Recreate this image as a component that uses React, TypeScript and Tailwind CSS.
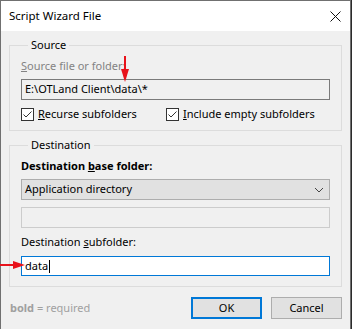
import React from "react";

const font = { fontFamily: "'Noto Sans', 'Open Sans', sans-serif" };

const CheckBox: React.FC<{ children: React.ReactNode }> = ({ children }) => (
  <label className="flex items-center gap-[4px]">
    <span className="flex size-[13px] items-center justify-center border border-[#333333] bg-white">
      <svg width="11" height="11" viewBox="0 0 11 11">
        <path d="M1.5 5.5 L4 8 L9.5 2.5" fill="none" stroke="#333" strokeWidth="1" />
      </svg>
    </span>
    <span>{children}</span>
  </label>
);

const GroupBox: React.FC<{
  title: string;
  className?: string;
  children: React.ReactNode;
}> = ({ title, className = "", children }) => (
  <fieldset className={`border border-[#dcdcdc] px-[11px] ${className}`}>
    <legend className="ml-[7px] px-[3px] leading-[16px]">{title}</legend>
    {children}
  </fieldset>
);

export default function App() {
  return (
    <div
      className="relative flex h-[329px] w-[352px] overflow-hidden bg-[#2b2b2b] text-[11px] text-black"
      style={font}
    >
      <div className="flex h-[330px] w-[351px] flex-col border border-[#707070] bg-[#f0f0f0]">
        {/* Title bar */}
        <div className="flex h-[30px] items-center justify-between bg-white pl-[8px] pr-[8px]">
          <span className="text-[11.5px] leading-[16px]">Script Wizard File</span>
          <svg width="11" height="11" viewBox="0 0 11 11" className="mr-[1px]">
            <path d="M0.5 0.5 L10.5 10.5 M10.5 0.5 L0.5 10.5" stroke="#111" strokeWidth="1" />
          </svg>
        </div>

        <div className="flex flex-col px-[8px] pt-[6px]">
          <GroupBox title="Source" className="pb-[9px]">
            <div className="pt-[5px] leading-[16px] text-[#838383]">
              <u>S</u>ource file or folder:
            </div>
            <div className="mt-[5px] flex h-[21px] items-center border border-[#7a7a7a] bg-[#f0f0f0] pl-[3px]">
              E:\OTLand Client\data\*
            </div>
            <div className="mt-[8px] flex h-[13px] items-center">
              <div className="w-[145px]">
                <CheckBox>
                  <u>R</u>ecurse subfolders
                </CheckBox>
              </div>
              <CheckBox>
                <u>I</u>nclude empty subfolders
              </CheckBox>
            </div>
          </GroupBox>

          <GroupBox title="Destination" className="mt-[6px] pb-[10px]">
            <div className="pt-[5px] font-bold leading-[16px]">
              Destination <u>b</u>ase folder:
            </div>
            <div className="mt-[5px] flex h-[21px] items-center justify-between border border-[#adadad] bg-[#e1e1e1] pl-[3px] pr-[5px]">
              <span>Application directory</span>
              <svg width="10" height="6" viewBox="0 0 10 6">
                <path d="M1 1 L5 5 L9 1" fill="none" stroke="#444" strokeWidth="1" />
              </svg>
            </div>
            <div className="mt-[7px] h-[21px] border border-[#cccccc] bg-[#f0f0f0]" />
            <div className="mt-[6px] leading-[16px]">
              Destination <u>s</u>ubfolder:
            </div>
            <div className="mt-[6px] flex h-[20px] items-center border border-[#0078d7] bg-white pl-[3px]">
              <span>data</span>
              <span className="ml-[1px] h-[13px] w-[1px] bg-black" />
            </div>
          </GroupBox>

          <div className="mt-[10px] flex items-center justify-between pl-[1px]">
            <span className="text-[#a0a0a0]">
              <b>bold</b> = required
            </span>
            <div className="flex gap-[9px]">
              <button className="h-[22px] w-[71px] border-2 border-[#0078d7] bg-[#e1e1e1]">
                OK
              </button>
              <button className="h-[22px] w-[71px] border border-[#adadad] bg-[#e1e1e1]">
                Cancel
              </button>
            </div>
          </div>
        </div>
      </div>

      {/* red annotation arrows */}
      <svg className="absolute left-[119px] top-[56px]" width="12" height="27" viewBox="0 0 12 27">
        <path d="M6 0 V14" stroke="#e8121b" strokeWidth="2" />
        <path d="M2 13 L10 13 L6 26 Z" fill="#e8121b" />
      </svg>
      <svg className="absolute left-0 top-[259px]" width="26" height="12" viewBox="0 0 26 12">
        <path d="M0 6 H14" stroke="#e8121b" strokeWidth="2" />
        <path d="M13 2 L13 10 L25 6 Z" fill="#e8121b" />
      </svg>
    </div>
  );
}
